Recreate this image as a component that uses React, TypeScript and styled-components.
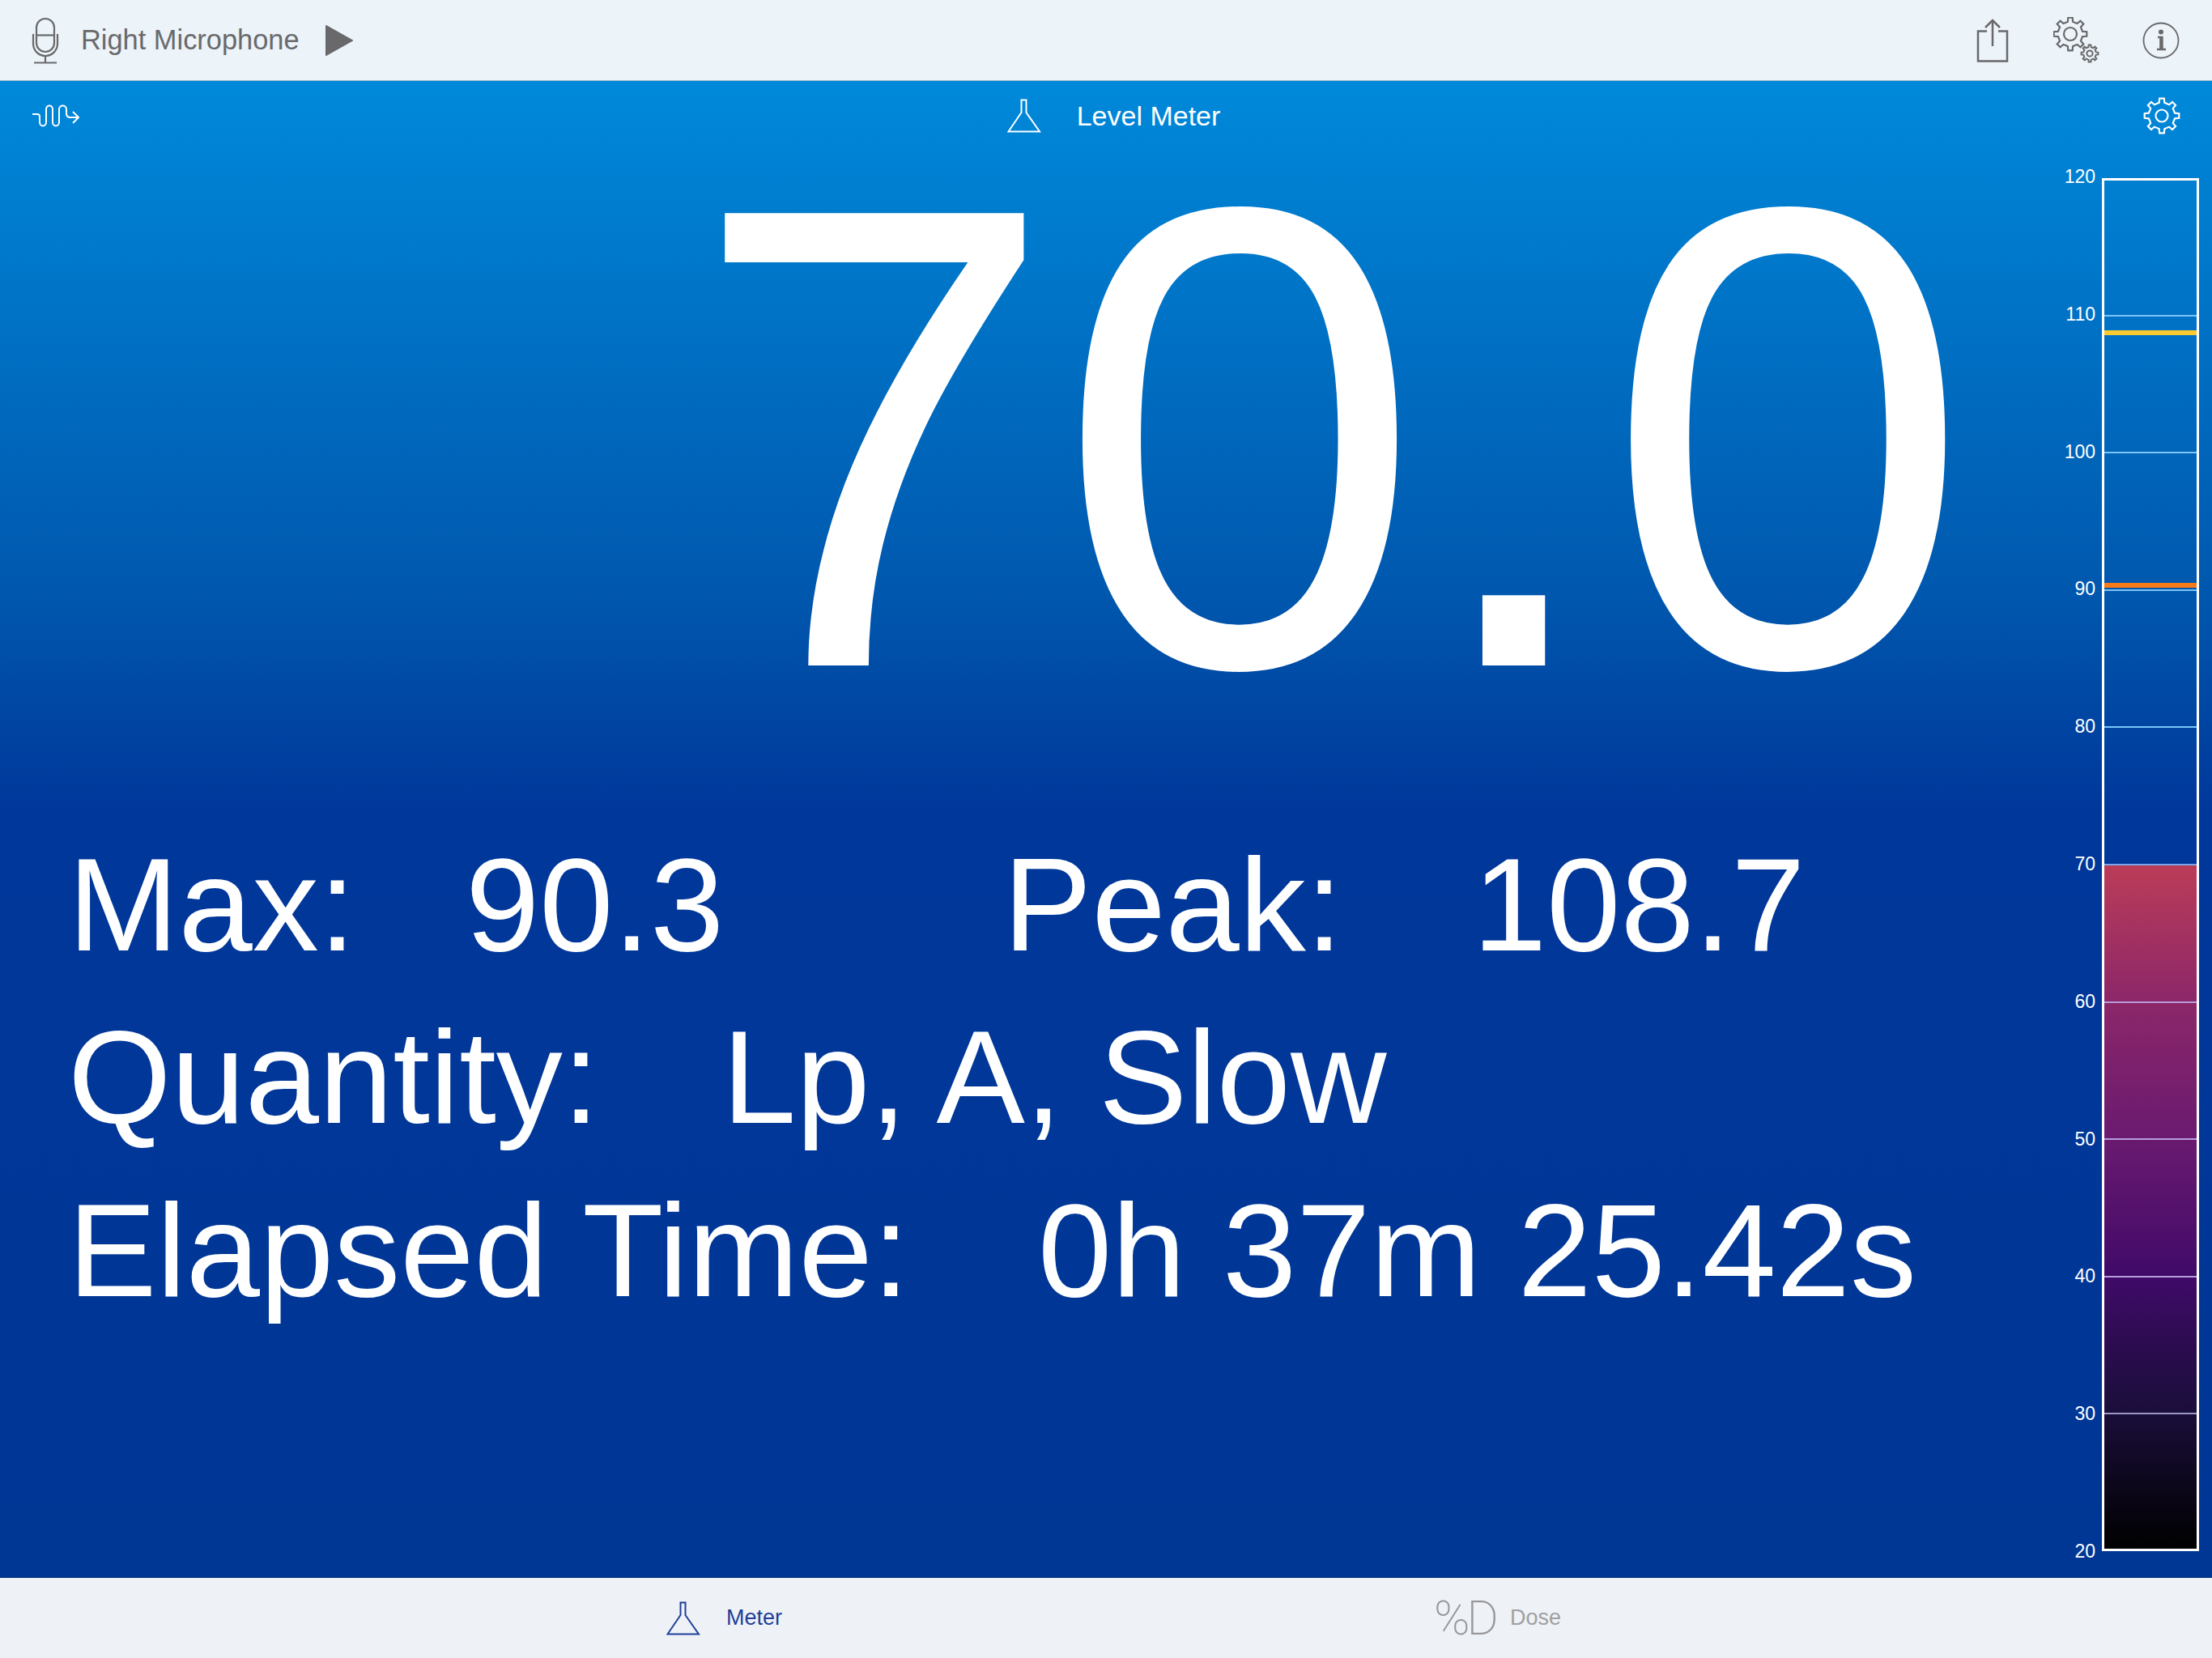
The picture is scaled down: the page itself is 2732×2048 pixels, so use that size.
import React from 'react';
import styled, { createGlobalStyle } from 'styled-components';

const GlobalStyle = createGlobalStyle`
  html, body {
    margin: 0;
    padding: 0;
    background: #eef3f8;
    font-family: "Liberation Sans", Arial, sans-serif;
  }
`;

const Page = styled.div`
  width: 2732px;
  height: 2048px;
  display: flex;
  flex-direction: column;
  overflow: hidden;
`;

const TopBar = styled.header`
  height: 99px;
  flex: none;
  display: flex;
  align-items: center;
  justify-content: space-between;
  background: #ecf3f9;
  border-bottom: 1px solid #a9bccb;
  padding: 0 40px 0 39px;
`;

const Group = styled.div<{ $gap: number }>`
  display: flex;
  align-items: center;
  gap: ${(p) => p.$gap}px;
`;

const MicName = styled.span`
  font-size: 34.4px;
  color: #69696b;
`;

const Screen = styled.main`
  flex: 1;
  display: flex;
  flex-direction: column;
  min-height: 0;
  background: linear-gradient(180deg, #0089da 0%, #0058ae 34%, #00379a 49%, #003795 100%);
`;

const SubBar = styled.div`
  height: 90px;
  flex: none;
  box-sizing: border-box;
  display: grid;
  grid-template-columns: 1fr auto 1fr;
  align-items: center;
  justify-items: start;
  padding: 0 39px 4px 40px;
`;

const Title = styled.div`
  display: flex;
  align-items: center;
  gap: 44px;
  padding-left: 18px;
  font-size: 34px;
  color: #fff;
`;

const GearSlot = styled.div`
  justify-self: end;
  display: flex;
`;

const Body = styled.div`
  flex: 1;
  display: flex;
  min-height: 0;
`;

const Readout = styled.section`
  flex: 1;
  display: flex;
  flex-direction: column;
  min-width: 0;
`;

const BigValue = styled.div`
  font-size: 812px;
  line-height: 700px;
  color: #fff;
  text-align: right;
  margin-top: 1px;
  padding-right: 102px;
  white-space: nowrap;
`;

const Stats = styled.div`
  margin-top: 120px;
  padding-left: 84px;
  display: flex;
  flex-direction: column;
`;

const StatRow = styled.div`
  height: 213.5px;
  display: flex;
  align-items: center;
  font-size: 164px;
  color: #fff;
  white-space: nowrap;
`;

const Label = styled.span<{ $width?: number }>`
  ${(p) => (p.$width ? `width: ${p.$width}px;` : '')}
`;

const Gauge = styled.aside`
  flex: none;
  display: flex;
  margin-top: 30px;
  height: 1696px;
  padding-right: 16px;
`;

const Scale = styled.div`
  position: relative;
  width: 60px;
`;

const ScaleLabel = styled.span`
  position: absolute;
  right: 8px;
  transform: translateY(-50%);
  font-size: 23px;
  color: #fff;
`;

const Frame = styled.div`
  position: relative;
  box-sizing: border-box;
  width: 120px;
  border: 3px solid #fff;
  overflow: hidden;
`;

const Fill = styled.div`
  position: absolute;
  left: 0;
  right: 0;
  bottom: 0;
  height: 50%;
  background: linear-gradient(180deg, #bb3c58 0%, #8c2769 20%, #6a1a70 40%, #400a68 60%, #1a0e3a 80%, #000 100%);
`;

const Tick = styled.div<{ $color: string }>`
  position: absolute;
  left: 0;
  right: 0;
  height: 2px;
  background: ${(p) => p.$color};
`;

const Marker = styled.div<{ $color: string }>`
  position: absolute;
  left: 0;
  right: 0;
  height: 6px;
  background: ${(p) => p.$color};
`;

const BottomBar = styled.nav`
  height: 100px;
  flex: none;
  box-sizing: border-box;
  background: #eef2f7;
  border-top: 1px solid #002a72;
  padding-left: 12px;
  display: grid;
  grid-template-columns: 955px 955px;
  justify-content: center;
`;

const Tab = styled.div<{ $active?: boolean; $gap: number }>`
  display: flex;
  align-items: center;
  justify-content: center;
  gap: ${(p) => p.$gap}px;
  font-size: 27px;
  color: ${(p) => (p.$active ? '#1f3f98' : '#a0a0a2')};
`;

const DoseGlyph = styled.span`
  font-family: Roboto, "Liberation Sans", sans-serif;
  font-size: 60px;
  font-weight: 200;
  letter-spacing: -4px;
  color: #98989a;
`;

const gearPath = (cx: number, cy: number, outer: number, inner: number, teeth: number) => {
  const pts: string[] = [];
  for (let i = 0; i < teeth; i++) {
    const step = (Math.PI * 2) / teeth;
    const a = i * step - Math.PI / 2;
    const w = step * 0.17;
    const at = (r: number, t: number) => `${(cx + r * Math.cos(t)).toFixed(2)} ${(cy + r * Math.sin(t)).toFixed(2)}`;
    pts.push(`${i === 0 ? 'M' : 'L'}${at(inner, a - w * 1.5)}`, `L${at(outer, a - w)}`, `L${at(outer, a + w)}`, `L${at(inner, a + w * 1.5)}`);
    pts.push(`Q${at(inner * 0.97, a + step / 2)} ${at(inner, a + step - w * 1.5)}`);
  }
  return pts.join(' ') + ' Z';
};

const Mic = () => (
  <svg width="34" height="58" viewBox="0 0 34 58" fill="none" stroke="#69696b" strokeWidth="2.2">
    <rect x="6" y="2" width="22" height="41" rx="11" />
    <path d="M6 22.5h22" />
    <path d="M2 21v12a15 15 0 0 0 30 0V21" />
    <path d="M17 48v8.5M3 56.5h28" />
  </svg>
);

const Play = () => (
  <svg width="34" height="40" viewBox="0 0 34 40">
    <path d="M1 2 33 20 1 38Z" fill="#69696b" stroke="#69696b" strokeWidth="2" strokeLinejoin="round" />
  </svg>
);

const Share = () => (
  <svg width="43" height="54" viewBox="0 0 43 54" fill="none" stroke="#69696b" strokeWidth="2.5">
    <path d="M13 15.5H2v37h36v-37H27" />
    <path d="M20 34V2M11 11l9-9 9 9" />
  </svg>
);

const Gears = () => (
  <svg width="58" height="58" viewBox="0 0 58 58" fill="none" stroke="#69696b" strokeWidth="2.2">
    <path d={gearPath(21, 21, 20.5, 15.5, 8)} />
    <circle cx="21" cy="21" r="8" />
    <path d={gearPath(45, 45, 10.5, 8, 8)} strokeWidth="2" />
    <circle cx="45" cy="45" r="3.6" strokeWidth="2" />
  </svg>
);

const Info = () => (
  <svg width="46" height="46" viewBox="0 0 46 46" fill="none" stroke="#69696b" strokeWidth="1.8">
    <circle cx="23" cy="23" r="21.5" />
    <circle cx="23" cy="12.5" r="3" fill="#69696b" stroke="none" />
    <path d="M19 19h5.5v15M18 34h11" strokeWidth="2.4" />
    <path d="M23 19v15" strokeWidth="3.6" />
  </svg>
);

const Wave = () => (
  <svg width="58" height="30" viewBox="0 0 58 30" fill="none" stroke="#fff" strokeWidth="2">
    <path d="M0 13h6c2 0 3 1 3 3v7c0 6 8 6 8 0V7c0-6 8-6 8 0v16c0 6 8 6 8 0V7c0-6 9-6 9 0v5c0 3 2 5 5 5h9" />
    <path d="M50 10l7 7-7 7" />
  </svg>
);

const Flask = ({ color }: { color: string }) => (
  <svg width="42" height="42" viewBox="0 0 42 42" fill="none" stroke={color} strokeWidth="2">
    <path d="M17.5 1.5h6v15.5L40 40.5H1.5L17.5 17Z" />
  </svg>
);

const Gear = () => (
  <svg width="46" height="46" viewBox="0 0 46 46" fill="none" stroke="#fff" strokeWidth="2.2">
    <path d={gearPath(23, 23, 21.5, 16.5, 8)} />
    <circle cx="23" cy="23" r="7.5" />
  </svg>
);

const SCALE = [120, 110, 100, 90, 80, 70, 60, 50, 40, 30, 20];
const pos = (v: number) => (120 - v) * 16.96;
const labelPos = (v: number) => (120 - v) * 16.98 - 2;

const tickColor = (v: number) => {
  if (v > 70) return '#7cc4fa';
  if (v === 70) return '#7ba6e6';
  if (v > 30) return '#b89cdc';
  return '#9a97c8';
};

export default function App() {
  return (
    <Page>
      <GlobalStyle />
      <TopBar>
        <Group $gap={27}>
          <Mic />
          <Group $gap={32}>
            <MicName>Right Microphone</MicName>
            <Play />
          </Group>
        </Group>
        <Group $gap={52}>
          <Share />
          <Gears />
          <Info />
        </Group>
      </TopBar>
      <Screen>
        <SubBar>
          <Wave />
          <Title>
            <Flask color="#fff" />
            Level Meter
          </Title>
          <GearSlot>
            <Gear />
          </GearSlot>
        </SubBar>
        <Body>
          <Readout>
            <BigValue>70.0</BigValue>
            <Stats>
              <StatRow>
                <Label $width={491}>Max:</Label>
                <Label $width={664}>90.3</Label>
                <Label $width={580}>Peak:</Label>
                <Label>108.7</Label>
              </StatRow>
              <StatRow>
                <Label $width={808}>Quantity:</Label>
                <Label>Lp, A, Slow</Label>
              </StatRow>
              <StatRow>
                <Label $width={1198}>Elapsed Time:</Label>
                <Label>0h 37m 25.42s</Label>
              </StatRow>
            </Stats>
          </Readout>
          <Gauge>
            <Scale>
              {SCALE.map((v) => (
                <ScaleLabel key={v} style={{ top: labelPos(v) }}>
                  {v}
                </ScaleLabel>
              ))}
            </Scale>
            <Frame>
              <Fill />
              {SCALE.slice(1, -1).map((v) => (
                <Tick key={v} $color={tickColor(v)} style={{ top: Math.round(pos(v) - 4) }} />
              ))}
              <Marker $color="#fbca2e" style={{ top: Math.round(pos(108.7) - 7) }} />
              <Marker $color="#f97a16" style={{ top: Math.round(pos(90.3) - 7) }} />
            </Frame>
          </Gauge>
        </Body>
      </Screen>
      <BottomBar>
        <Tab $active $gap={32}>
          <Flask color="#1f3f98" />
          Meter
        </Tab>
        <Tab $gap={18}>
          <DoseGlyph>%D</DoseGlyph>
          Dose
        </Tab>
      </BottomBar>
    </Page>
  );
}
